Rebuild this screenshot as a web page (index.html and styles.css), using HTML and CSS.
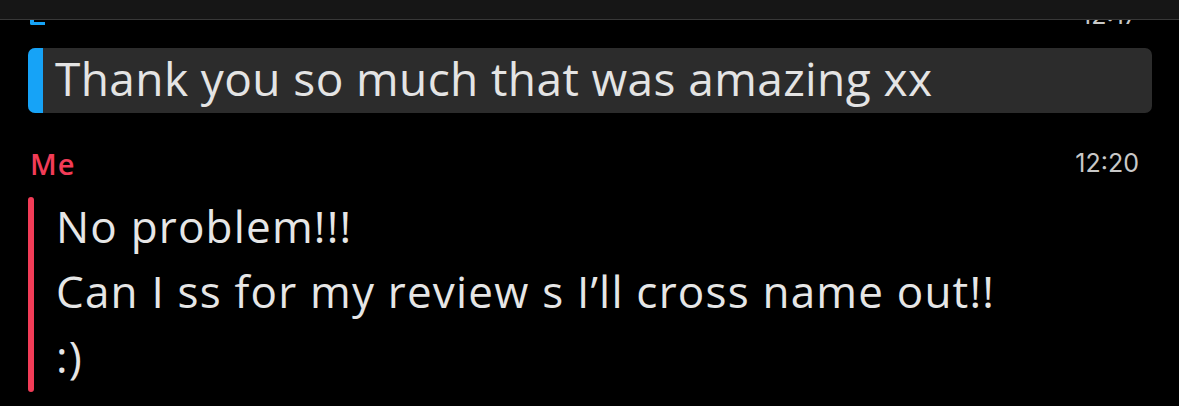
FILE: index.html
```html
<!DOCTYPE html>
<html>
<head>
    <title>Chat</title>
    <link rel="stylesheet" href="styles.css">
</head>
<body>
    <div class="topbar"></div>
    <div class="chat">
        <div class="prev-tail">
            <div class="tail-bar"></div>
            <span class="time">12:17</span>
        </div>

        <div class="quote">
            <div class="quote-bar"></div>
            <div class="quote-text">Thank you so much that was amazing xx</div>
        </div>

        <div class="msg-head">
            <span class="sender">Me</span>
            <span class="time">12:20</span>
        </div>
        <div class="msg-body">
            <div class="msg-bar"></div>
            <div class="msg-lines">
                <div>No problem!!!</div>
                <div>Can I ss for my review s I’ll cross name out!!</div>
                <div>:)</div>
            </div>
        </div>
    </div>
</body>
</html>
```

FILE: styles.css
```css
body {
    margin: 0;
    padding: 0;
    background-color: #000;
    font-family: "Open Sans", Lato, sans-serif;
    color: #e6e6e6;
    overflow: hidden;
}
.topbar {
    position: absolute;
    top: 0;
    left: 0;
    right: 0;
    height: 19px;
    background: #161616;
    border-bottom: 1px solid #383838;
}
.chat {
    display: flex;
    flex-direction: column;
}
.prev-tail {
    height: 28px;
    display: flex;
    justify-content: space-between;
    align-items: flex-end;
    padding: 0 41px 0 30px;
}
.tail-bar {
    width: 11px;
    height: 2px;
    border-left: 4px solid #16a3f7;
    border-bottom: 3px solid #16a3f7;
    border-bottom-left-radius: 2px;
    margin-bottom: 3px;
}
.time {
    font-family: Inter, Roboto, sans-serif;
    font-size: 25px;
    line-height: 1;
    color: #c8c8c8;
}
.quote {
    display: flex;
    height: 65px;
    margin: 20px 27px 0 28px;
    background: #2c2c2c;
    border-radius: 7px;
    overflow: hidden;
}
.quote-bar {
    width: 15px;
    background: #16a3f7;
}
.quote-text {
    padding-left: 12px;
    font-size: 46px;
    line-height: 61px;
    letter-spacing: 0.4px;
    color: #e4e4e4;
}
.msg-head {
    display: flex;
    justify-content: space-between;
    align-items: center;
    margin-top: 31px;
    padding: 0 40px 0 30px;
}
.sender {
    font-size: 29px;
    font-weight: 600;
    letter-spacing: 1px;
    color: #f23c57;
}
.msg-body {
    display: flex;
    margin: 14px 0 0 28px;
}
.msg-bar {
    width: 6px;
    border-radius: 3px;
    background: #f23c57;
}
.msg-lines {
    margin: -3px 0 3px;
    padding-left: 22px;
    font-size: 44px;
    line-height: 65px;
    letter-spacing: 1.2px;
}
```
